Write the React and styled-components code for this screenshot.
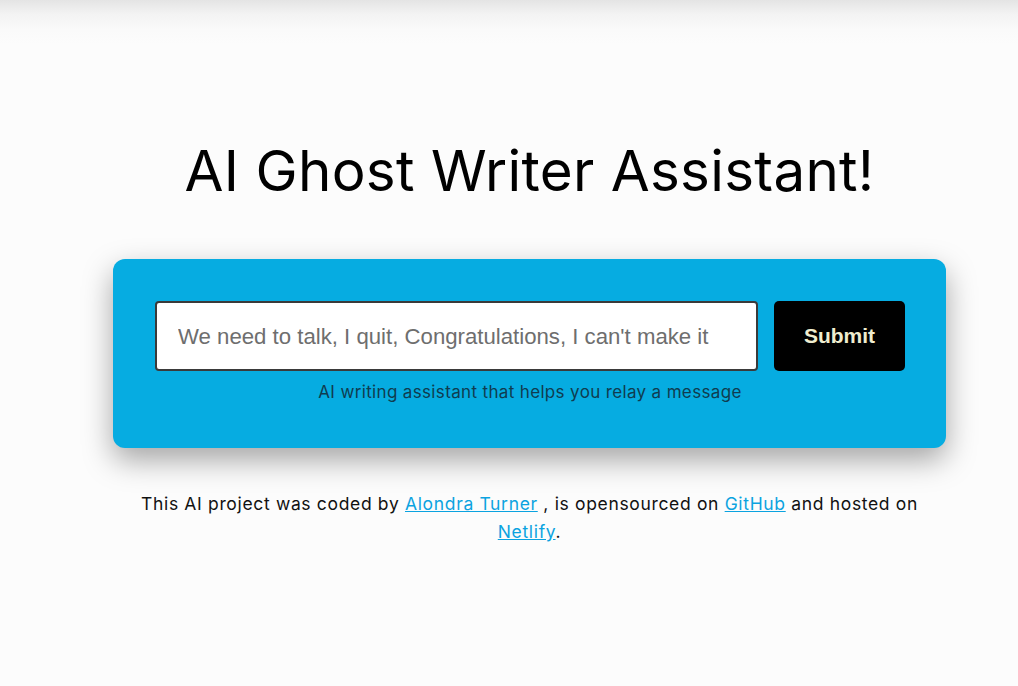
import React, { useState } from "react";
import styled, { createGlobalStyle } from "styled-components";

const GlobalStyle = createGlobalStyle`
  html, body {
    margin: 0;
    padding: 0;
    background: #fcfcfc;
  }
  body {
    font-family: Inter, "Liberation Sans", sans-serif;
  }
`;

const Page = styled.div`
  min-height: 686px;
  background: linear-gradient(to bottom, #e4e4e4 0px, #f3f3f3 14px, #fafafa 30px, #fcfcfc 44px, #fcfcfc 100%);
  padding-left: 41px;
  box-sizing: border-box;
  display: flex;
  flex-direction: column;
  align-items: center;
`;

const Title = styled.h1`
  margin: 136px 0 0;
  font-family: Inter, "Liberation Sans", sans-serif;
  font-weight: 400;
  font-size: 56.5px;
  line-height: 70px;
  color: #000;
  letter-spacing: 0.3px;
`;

const Card = styled.form`
  margin-top: 53px;
  width: 833px;
  box-sizing: border-box;
  padding: 42px 41px 44px 42px;
  background: #06ace1;
  border-radius: 12px;
  box-shadow: 0 12px 30px rgba(0, 0, 0, 0.35);
`;

const Row = styled.div`
  display: flex;
  gap: 16px;
`;

const Field = styled.input`
  flex: 1;
  height: 70px;
  box-sizing: border-box;
  border: 2px solid #3a3a3a;
  border-radius: 4px;
  padding: 2px 21px 0;
  font-family: "Liberation Sans", Arial, sans-serif;
  font-size: 22.2px;
  background: #fff;
  outline: none;

  &::placeholder {
    color: #6e6e6e;
  }
`;

const SubmitButton = styled.button`
  width: 131px;
  height: 70px;
  border: none;
  border-radius: 5px;
  background: #000;
  color: #efedcf;
  font-family: "Liberation Sans", Arial, sans-serif;
  font-weight: 700;
  font-size: 21px;
  cursor: pointer;
`;

const Caption = styled.p`
  margin: 9px 0 0;
  text-align: center;
  font-family: Inter, "Liberation Sans", sans-serif;
  font-size: 17px;
  letter-spacing: 0.35px;
  line-height: 24px;
  color: #103c50;
`;

const Footer = styled.footer`
  margin-top: 42px;
  width: 800px;
  text-align: center;
  font-family: Inter, "Liberation Sans", sans-serif;
  font-size: 17.5px;
  letter-spacing: 0.66px;
  line-height: 28px;
  color: #111;
`;

const Link = styled.a`
  color: #0ba3e0;
  text-decoration: underline;
`;

export default function App() {
  const [text, setText] = useState("");

  return (
    <>
      <GlobalStyle />
      <Page>
        <Title>AI Ghost Writer Assistant!</Title>
        <Card onSubmit={(e) => e.preventDefault()}>
          <Row>
            <Field
              type="search"
              value={text}
              onChange={(e) => setText(e.target.value)}
              placeholder="We need to talk, I quit, Congratulations, I can't make it"
            />
            <SubmitButton type="submit">Submit</SubmitButton>
          </Row>
          <Caption>AI writing assistant that helps you relay a message</Caption>
        </Card>
        <Footer>
          This AI project was coded by <Link href="#">Alondra Turner</Link> , is
          opensourced on <Link href="#">GitHub</Link> and hosted on{" "}
          <Link href="#">Netlify</Link>.
        </Footer>
      </Page>
    </>
  );
}
